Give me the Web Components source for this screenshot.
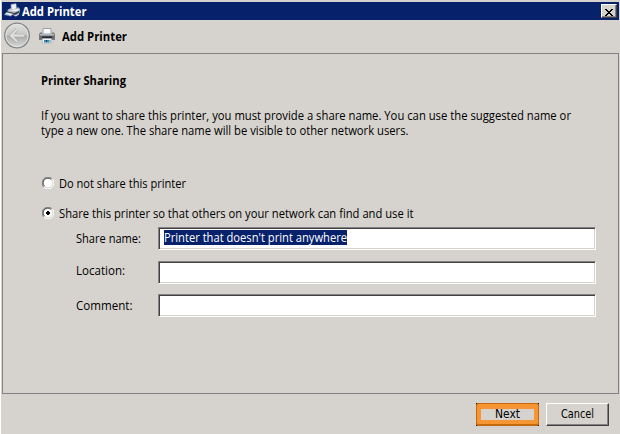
<!DOCTYPE html>
<html lang="en">
<head>
<meta charset="utf-8">
<title>Add Printer</title>
<style>
html,body{margin:0;width:620px;height:434px;overflow:hidden;background:#fff}
body{font:12px/15px "Open Sans","Noto Sans",sans-serif;color:#000}
</style>
</head>
<body>
<printer-dialog></printer-dialog>
<script>
const define=(name,html,setup)=>{
  const t=document.createElement('template');t.innerHTML=html;
  customElements.define(name,class extends HTMLElement{
    connectedCallback(){
      if(this.shadowRoot)return;
      this.attachShadow({mode:'open'}).append(t.content.cloneNode(true));
      if(setup)setup(this,this.shadowRoot);
    }
  });
};

/* One line of text, condensed so that it fills the width given in "w". */
define('fit-text',`<style>:host{display:block;white-space:nowrap}span{display:inline-block;vertical-align:top;transform-origin:0 50%}</style><span></span>`,(el,root)=>{
  const s=root.querySelector('span');
  s.textContent=el.getAttribute('text');
  const w=+el.getAttribute('w');
  el.style.width=w+'px';
  s.style.transform='scaleX('+w/s.getBoundingClientRect().width+')';
});

define('printer-icon',`<style>:host{display:block}svg{display:block}</style>
<svg width="16" height="16" viewBox="0 0 16 16">
<path d="M4 .5h8V6H4z" fill="#f7f9fb" stroke="#999fa6"/>
<path d="M1 4.500h2V6h10V4.500h2l1 2v5.500H0V6.500z" fill="#777b80"/>
<path d="M1 6h14v1.500H1z" fill="#b5b8bb"/><path d="M1 8h14v2.500H1z" fill="#64696e"/>
<path d="M3 8.500h10v2H3z" fill="#24282d"/>
<path d="M3.500 10.500h9l.4 4.500H3.100z" fill="#eef4f7" stroke="#a8b1b8" stroke-width=".7"/>
<path d="M5 12h5v2.500H5z" fill="#438cab"/><path d="M7 12h1v2H7z" fill="#163c68"/><path d="M10 12h2v2.500h-2z" fill="#91bfc9"/>
</svg>`);

define('device-icon',`<style>:host{display:block}svg{display:block}</style>
<svg width="17" height="16" viewBox="0 0 17 16">
<path d="M7 1.500l5-.8L12.500 6l-5 1z" fill="#eef2f5" stroke="#aeb6c1" stroke-width=".6"/>
<path d="M3.500 7l3-2 1 1.500 5-1 1.500-1.500 2 2-.5 4-5 2.500-6.500-2z" fill="#b7bcc3"/>
<path d="M5 7l9-1 1.500 1-4 1.500z" fill="#eceff1"/>
<path d="M4 8.500l6 1.500 5-2v2l-4.500 2-6.500-2z" fill="#3c424b"/>
<path d="M2.500 9.500l6.500 1.500-2.500 2-6-1.500z" fill="#f4f6f8" stroke="#aab2bc" stroke-width=".5"/>
<path d="M2.500 11.300l3.500 1-1 .8-3.500-1z" fill="#5590af"/>
<path d="M9 12.500l3-.5 3-2v1.500l-3 2z" fill="#d3d7da"/>
</svg>`);

define('title-bar',`<style>
:host{display:flex;box-sizing:border-box;height:18px;background:#08216b;color:#fff;align-items:center;padding:0 2px 0 2px;font-weight:700}
fit-text{margin-left:1px}
button{all:unset;box-sizing:border-box;width:16px;height:14px;margin-left:auto;background:#d6d3ce;border:1px solid;border-color:#fff #424142 #424142 #fff;box-shadow:inset -1px -1px #848284}
svg{display:block;margin:2px 0 0 3px}
</style><device-icon></device-icon><fit-text text="Add Printer" w="64.500"></fit-text><button aria-label="Close"><svg width="8" height="7" viewBox="0 0 8 7" shape-rendering="crispEdges"><path d="M0 0h2v1h1v1h2V1h1V0h2v1H7v1H6v1H5v1h1v1h1v1h1v1H6V6H5V5H3v1H2v1H0V6h1V5h1V4h1V3H2V2H1V1H0z"/></svg></button>`);

define('wizard-header',`<style>
:host{display:flex;height:33px;align-items:center;padding:0 0 1px 2px;box-sizing:border-box;font-weight:700}
.back{display:block;flex:none}printer-icon{margin-left:8px}fit-text{margin-left:7px}
</style><svg class="back" width="27" height="28" viewBox="0 0 27 28">
<defs><linearGradient id="g" x2="0" y2="1"><stop stop-color="#e0e0de"/><stop offset=".46" stop-color="#c9c9c8"/><stop offset=".54" stop-color="#aeaeae"/><stop offset="1" stop-color="#d8d8d6"/></linearGradient></defs>
<circle cx="13" cy="13.500" r="12.300" fill="url(#g)" stroke="#83878b" stroke-width="1.300"/>
<circle cx="13" cy="13.500" r="11.100" fill="none" stroke="#e5e5e3" stroke-width=".9"/>
<path d="M13 7.500L7 13.500l6 6M7.500 13.500H20" fill="none" stroke="#a5a5a4" stroke-width="3.600"/>
<path d="M13 7.500L7 13.500l6 6M7.500 13.500H20" fill="none" stroke="#dddddb" stroke-width="2.300"/></svg>
<printer-icon></printer-icon><fit-text text="Add Printer" w="65"></fit-text>`);

define('radio-option',`<style>:host{display:flex;height:16px;align-items:center}svg{flex:none;margin:0 5px 0 1px}.dot{display:none}:host([checked]) .dot{display:block}</style>
<svg width="12" height="12" viewBox="0 0 12 12"><circle cx="6" cy="6" r="5" fill="#fff"/>
<path d="M1.800 10.200A5.500 5.500 0 0 1 10.200 1.800" fill="none" stroke="#848284"/><path d="M2.500 9.200A4.600 4.600 0 0 1 9.200 2.500" fill="none" stroke="#424142"/>
<path d="M10.200 1.800A5.500 5.500 0 0 1 1.800 10.200" fill="none" stroke="#fff"/><path d="M9.400 2.800A4.500 4.500 0 0 1 2.800 9.400" fill="none" stroke="#d6d3ce" stroke-width=".8"/>
<path class="dot" d="M5 4h2v1h1v2H7v1H5V7H4V5h1z"/></svg><slot></slot>`);

define('form-row',`<style>
:host{display:flex;height:23px}
.label{width:82px;padding-top:var(--drop,4px);box-sizing:border-box}
.field{box-sizing:border-box;width:438px;height:23px;background:#fff;border:1px solid;border-color:#848284 #fff #fff #848284;box-shadow:inset 1px 1px #424142,inset -1px -1px #d6d3ce;padding:2px 0 0 5px}
</style><div class="label"><slot name="label"></slot></div><div class="field"><slot></slot></div>`);

define('push-button',`<style>
:host{display:flex;box-sizing:border-box;width:63px;height:23px;align-items:center;justify-content:center;background:#d6d3ce;border:1px solid;border-color:#fff #424142 #424142 #fff;box-shadow:inset -1px -1px #848284;font:11.500px/14px "DejaVu Sans Condensed","DejaVu Sans",sans-serif}
:host([marked]){background:#000;border:0;box-shadow:none}
:host([marked]) div{position:relative;box-sizing:border-box;width:63px;height:23px;border:5px solid #f79434;border-top-width:6px;border-bottom-width:6px;border-radius:3px;background:#d6d3ce;display:flex;align-items:center;justify-content:center}
:host([marked]) div::after{content:"";position:absolute;inset:-6px -5px;border:1px solid #c56a0c;border-bottom-width:2px;border-radius:3px}
fit-text,::slotted(*){position:relative;top:-.5px}
</style><div><slot></slot></div>`);

define('printer-dialog',`<style>
:host{display:block;box-sizing:border-box;width:619px;height:434px;margin-left:1px;padding:2px 1px 0;background:#d6d3ce}
main{box-sizing:border-box;width:617px;height:341px;border:1px solid #848284;padding:19px 0 0 38px}
h1{margin:0;font:inherit;font-weight:700}
.copy{margin-top:20px}
.options{margin-top:37px}
radio-option+radio-option{margin-top:14px}
.rows{padding-left:35px;margin-top:6px}
form-row:nth-child(2){margin-top:11px;--drop:2px}
form-row:nth-child(3){margin-top:10px;--drop:4px}
mark{display:block;width:183px;height:15px;background:#08216b;color:#fff}
footer{display:flex;justify-content:flex-end;gap:7px;padding:9px 10px 0 0}
</style>
<title-bar></title-bar><wizard-header></wizard-header>
<main><h1><fit-text text="Printer Sharing" w="85"></fit-text></h1>
<div class="copy"><fit-text text="If you want to share this printer, you must provide a share name. You can use the suggested name or" w="530"></fit-text><fit-text text="type a new one. The share name will be visible to other network users." w="367.500"></fit-text></div>
<div class="options"><radio-option><fit-text text="Do not share this printer" w="127"></fit-text></radio-option><radio-option checked><fit-text text="Share this printer so that others on your network can find and use it" w="354.500"></fit-text></radio-option></div>
<div class="rows">
<form-row><fit-text slot="label" text="Share name:" w="65"></fit-text><mark><fit-text text="Printer that doesn't print anywhere" w="183"></fit-text></mark></form-row>
<form-row><fit-text slot="label" text="Location:" w="49"></fit-text></form-row>
<form-row><fit-text slot="label" text="Comment:" w="56.500"></fit-text></form-row></div></main>
<footer><push-button marked><fit-text text="Next" w="25"></fit-text></push-button><push-button><fit-text text="Cancel" w="33"></fit-text></push-button></footer>`);
</script>
</body>
</html>
